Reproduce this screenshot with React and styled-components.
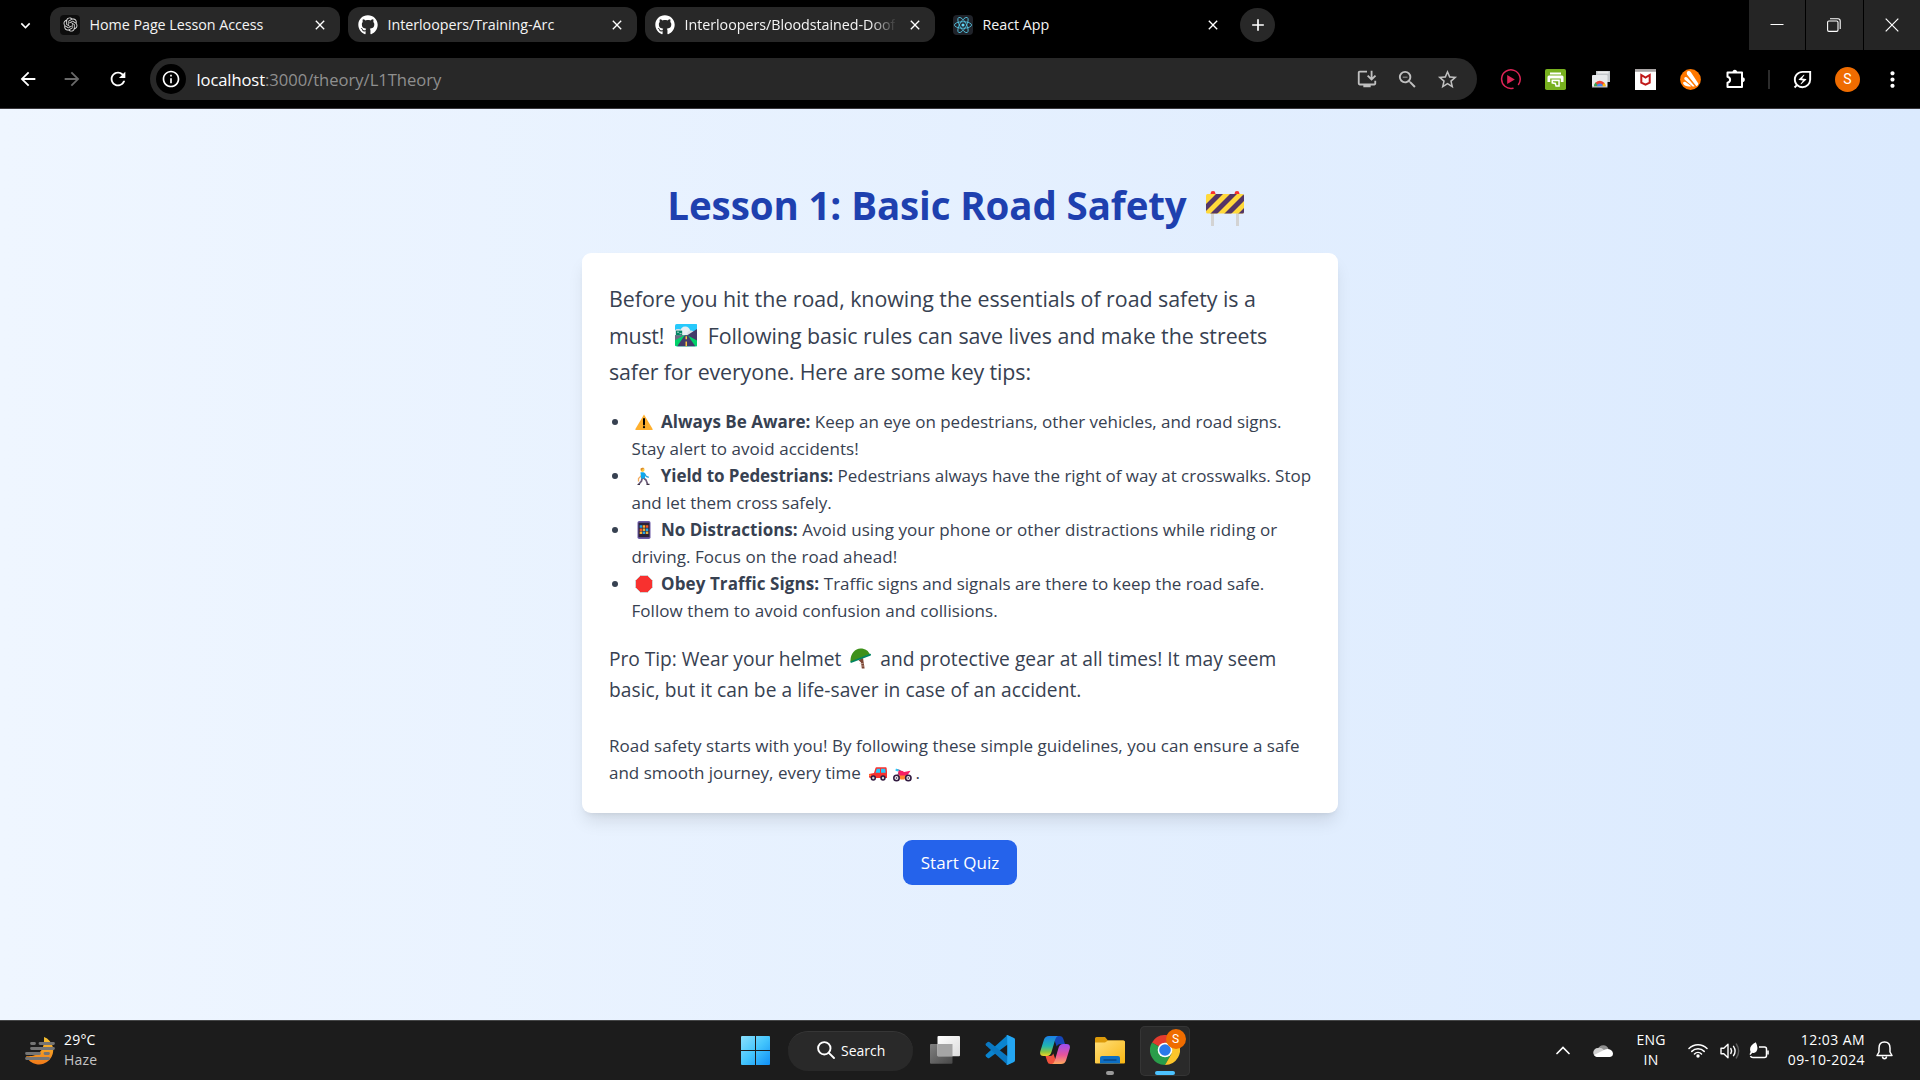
import React from 'react';
import styled, { createGlobalStyle, css } from 'styled-components';
import { FaGithub } from 'react-icons/fa';
import { RiOpenaiFill } from 'react-icons/ri';
import {
  MdArrowBack, MdArrowForward, MdRefresh, MdInfoOutline, MdStarBorder, MdZoomOut,
  MdOutlineInstallDesktop, MdOutlineEnergySavingsLeaf, MdMoreVert,
  MdExpandMore, MdClose, MdAdd,
} from 'react-icons/md';

const Global = createGlobalStyle`
  *, *::before, *::after { box-sizing: border-box; }
  body { margin: 0; background: #000; overflow: hidden; }
  svg { display: block; flex: none; }
`;

const Screen = styled.div`
  width: 1920px;
  height: 1080px;
  display: flex;
  flex-direction: column;
  font-family: "Open Sans", "Noto Sans", sans-serif;
`;

/* ---------- browser ---------- */

const TabStrip = styled.header`
  height: 50px;
  display: flex;
  align-items: flex-start;
  background: #000;
  color: #fff;
`;

const TabSearch = styled.div`
  width: 50px;
  height: 50px;
  display: grid;
  place-items: center;
`;

const Tab = styled.div`
  width: ${p => p.$width}px;
  height: 35px;
  margin: 7px 8px 0 0;
  padding: 0 11px 0 10px;
  display: flex;
  align-items: center;
  border-radius: 12px;
  background: ${p => (p.$active ? '#000' : '#282828')};
`;

const Favicon = styled.span`
  width: 20px;
  height: 20px;
  flex: none;
  display: grid;
  place-items: center;
  border-radius: 4px;
  background: ${p => p.$bg || 'transparent'};
`;

const TabTitle = styled.span`
  width: 210px;
  margin-left: 9.5px;
  padding-top: 1px;
  overflow: hidden;
  white-space: nowrap;
  font-size: 14.3px;
  line-height: 22px;
  letter-spacing: -0.04px;
  color: #f4f4f4;
  ${p => p.$fade && css`
    mask-image: linear-gradient(to right, #000 88%, transparent 101%);
  `}
`;

const TabClose = styled.span`
  margin-left: auto;
  width: 18px;
  height: 18px;
  flex: none;
  display: grid;
  place-items: center;
`;

const NewTab = styled.div`
  width: 35px;
  height: 34px;
  margin: 8px 0 0 -1px;
  border-radius: 50%;
  background: #282828;
  display: grid;
  place-items: center;
`;

const WindowControls = styled.div`
  margin-left: auto;
  display: flex;
  gap: 1px;
`;

const WindowButton = styled.div`
  width: 56.4px;
  height: 50px;
  background: #252525;
  display: grid;
  place-items: center;
`;

const Toolbar = styled.div`
  height: 59px;
  padding: 0 5px 0 6px;
  display: flex;
  align-items: center;
  background: #000;
  border-bottom: 1px solid #38363a;
  color: #fff;
`;

const ToolSlot = styled.div`
  width: ${p => p.$width || 45}px;
  height: 42px;
  flex: none;
  display: grid;
  place-items: center;
  color: ${p => p.$color || '#fff'};
`;

const AddressBar = styled.div`
  width: 1327px;
  height: 42px;
  margin: 0 11px 0 8px;
  padding: 0 10px 0 6px;
  display: flex;
  align-items: center;
  border-radius: 21px;
  background: #282828;
`;

const SiteInfo = styled.div`
  width: 30px;
  height: 30px;
  border-radius: 50%;
  background: #000;
  display: grid;
  place-items: center;
`;

const Url = styled.div`
  margin: 0 auto 0 10.5px;
  padding-top: 1px;
  font-size: 16.6px;
  line-height: 24px;
  letter-spacing: -0.02px;
  color: #8f8f8f;
  b { font-weight: 400; color: #fff; letter-spacing: -0.12px; }
`;

const Separator = styled.span`
  width: 2px;
  height: 19px;
  margin: 0 10px;
  background: #2c2c2c;
`;

const Avatar = styled.span`
  width: ${p => p.$size}px;
  height: ${p => p.$size}px;
  border-radius: 50%;
  background: #ef6c00;
  color: #fff;
  display: grid;
  place-items: center;
  font: 400 ${p => p.$font}px/1 Roboto, sans-serif;
`;

/* ---------- page ---------- */

const Page = styled.main`
  height: 911px;
  padding-top: 72px;
  display: flex;
  flex-direction: column;
  align-items: center;
  background: linear-gradient(to right, #eff6ff, #dbeafe);
`;

const Heading = styled.h1`
  margin: 0 0 27px;
  height: 45px;
  display: flex;
  align-items: center;
  gap: 19px;
  padding: 3px 9px 0 0;
  font-size: 38.5px;
  line-height: 45px;
  font-weight: 700;
  letter-spacing: -0.11px;
  color: #1e40af;
  white-space: nowrap;
`;

const Card = styled.section`
  width: 756px;
  height: 560px;
  padding: 27px;
  border-radius: 9px;
  background: #fff;
  color: #374151;
  box-shadow: 0 11.25px 17px -3.4px rgba(0, 0, 0, 0.1), 0 4.5px 6.75px -4.5px rgba(0, 0, 0, 0.1);
`;

const Line = styled.div`
  display: flex;
  align-items: center;
  white-space: nowrap;
`;

const Run = styled.span`
  height: 1lh;
  padding-top: var(--text-drop, 0px);
  letter-spacing: ${p => p.$track || 0}px;
  margin-left: ${p => p.$gap || 0}px;
`;

const Strong = styled.strong`
  height: 1lh;
  font-weight: 700;
  margin-left: 8.5px;
  letter-spacing: ${p => p.$track || 0}px;
`;

const Lead = styled.div`
  --text-drop: 1px;
  margin-bottom: 18px;
  font-size: 21.4px;
  line-height: 36.56px;
`;

const Tips = styled.ul`
  list-style: none;
  margin: 0 0 18px;
  padding: 0;
  font-size: 17px;
  line-height: 27px;
`;

const Tip = styled.li`
  padding-left: 22.5px;
`;

const Bullet = styled.span`
  width: 6px;
  height: 6px;
  margin: 2px 13px 0 -19.5px;
  border-radius: 50%;
  background: #374151;
`;

const ProTip = styled.div`
  --text-drop: 1px;
  margin-bottom: 27px;
  font-size: 19.2px;
  line-height: 31.5px;
`;

const Closing = styled.div`
  font-size: 17px;
  line-height: 27px;
`;

const EmojiBox = styled.span`
  display: inline-grid;
  place-items: center;
  width: ${p => p.$w}px;
  margin-left: ${p => p.$gap || 0}px;
  margin-top: ${p => p.$drop || 0}px;
`;

const QuizButton = styled.button`
  margin-top: 27px;
  width: 114px;
  height: 45px;
  padding: 0 0 1px;
  border: 0;
  border-radius: 9px;
  background: #2563eb;
  color: #fff;
  font: 400 17px/27px "Open Sans", sans-serif;
  letter-spacing: 0.05px;
`;

/* ---------- taskbar ---------- */

const Taskbar = styled.footer`
  height: 60px;
  display: grid;
  grid-template-columns: 720px 1fr 430px;
  background: #1c1c1c;
  border-top: 1px solid #454647;
  color: #fff;
`;

const Weather = styled.div`
  padding-left: 25px;
  display: flex;
  align-items: center;
  gap: 9px;
`;

const Stack = styled.div`
  flex: none;
  display: flex;
  flex-direction: column;
  align-items: ${p => p.$align || 'flex-start'};
  width: ${p => (p.$width ? p.$width + 'px' : 'auto')};
  padding-bottom: 2px;
  font-size: 14px;
  line-height: 20px;
  letter-spacing: ${p => p.$track || 0.2}px;
  white-space: nowrap;
`;

const Muted = styled.span`
  color: #c4c4c4;
`;

const Apps = styled.nav`
  padding-left: 8px;
  display: flex;
  align-items: center;
`;

const SearchPill = styled.div`
  width: 125px;
  height: 40px;
  margin: 0 4px 0 5px;
  padding: 0 0 2px 28.5px;
  display: flex;
  align-items: center;
  gap: 6.5px;
  border-radius: 20px;
  border-top: 1px solid #363636;
  background: #292929;
  font-size: 14px;
`;

const AppSlot = styled.div`
  width: 55px;
  height: 50px;
  display: grid;
  grid-template-rows: 45px 4px 1fr;
  justify-items: center;
  align-items: center;
  & > svg { margin-top: 4px; }
`;

const ActiveApp = styled(AppSlot)`
  width: 50px;
  margin-left: 2.5px;
  border-radius: 5px;
  background: #2a2a2a;
  box-shadow: inset 0 0 0 1px #353535;
`;

const Indicator = styled.span`
  width: ${p => (p.$active ? 20 : 8)}px;
  height: 4px;
  border-radius: 2px;
  background: ${p => (p.$active ? '#4cc2ff' : '#9a9a9a')};
`;

const ChromeIcon = styled.div`
  position: relative;
  width: 30px;
  height: 30px;
  margin-top: 4px;
`;

const Badge = styled.span`
  position: absolute;
  top: -6px;
  right: -6px;
`;

const Tray = styled.div`
  padding-right: 16px;
  display: flex;
  align-items: center;
  justify-content: flex-end;
`;

const TraySlot = styled.div`
  width: ${p => p.$width}px;
  flex: none;
  display: grid;
  place-items: center;
`;

/* ---------- emoji drawings ---------- */

const Emoji = ({ w, h, gap, drop, vb, children }) => (
  <EmojiBox $w={w} $gap={gap} $drop={drop}>
    <svg width={w} height={h} viewBox={vb || `0 0 ${w} ${h}`}>{children}</svg>
  </EmojiBox>
);

const Barrier = () => (
  <Emoji w={38} h={35} drop={6}>
    <clipPath id="board"><rect x="0" y="3" width="38" height="19.5" rx="1.5" /></clipPath>
    <circle cx="7" cy="2.5" r="2.4" fill="#f8312f" />
    <circle cx="31" cy="2.5" r="2.4" fill="#f8312f" />
    <path d="M5 22h3v13H5zM30 22h3v13h-3z" fill="#d3d3d3" />
    <g clipPath="url(#board)">
      <rect y="3" width="38" height="20" fill="#ffd93b" />
      <path d="M-2 15 11 2h7L-3 23zM4 23 25 2h7L11 23zM18 23 39 2v7L25 23zM32 23l8-8v8z" fill="#533566" />
    </g>
  </Emoji>
);

const Motorway = () => (
  <Emoji w={22.5} h={22.5} gap={10.5} drop={1} vb="0 0 22 22">
    <clipPath id="scene"><rect width="22" height="22" rx="1.6" /></clipPath>
    <g clipPath="url(#scene)">
      <rect width="22" height="22" fill="#26c9fc" />
      <circle cx="10" cy="7.5" r="5" fill="#e8eef2" />
      <circle cx="15.500" cy="10" r="3.600" fill="#d9e2e8" />
      <circle cx="3" cy="9" r="4" fill="#d9e2e8" />
      <path d="M0 11h22v11H0z" fill="#00d26a" />
      <path d="M22 4.500v12L12 11z" fill="#433b6b" />
      <path d="M9.500 11h3L20 22H2z" fill="#433b6b" />
      <path d="M0 11h9L0 16z" fill="#6b6a86" />
      <path d="M11 12v3M11 17v5" stroke="#ffc83d" strokeWidth="1.500" />
      <rect x="1" y="6.500" width="6" height="4.300" fill="#008463" />
      <path d="M2 8h2M4.500 9.500h2" stroke="#fff" strokeWidth=".7" />
    </g>
  </Emoji>
);

const Warning = () => (
  <Emoji w={18} h={16} gap={3.5} drop={2}>
    <path d="M9 .5 17.6 15a.7.7 0 0 1-.6 1H1a.7.7 0 0 1-.6-1z" fill="#ffb02e" />
    <path d="M9 5v5.600" stroke="#000" strokeWidth="2" strokeLinecap="round" />
    <circle cx="9" cy="13.200" r="1.100" fill="#000" />
  </Emoji>
);

const Walker = () => (
  <Emoji w={18} h={18} gap={3.5} drop={2}>
    <path d="M8 8 4.500 11.500v3" stroke="#f3ad61" strokeWidth="1.300" fill="none" />
    <path d="M8.500 10 7.500 14 4.500 17.500M9 10.500l3 2.500 1.500 4" stroke="#6b5b78" strokeWidth="1.700" fill="none" />
    <path d="M6.500 5.200h3L11 6v5.500H7z" fill="#0da8ee" />
    <path d="m10.500 6.500 1.800 3 2.500.8" stroke="#2a9fdc" strokeWidth="1.400" fill="none" />
    <circle cx="8.500" cy="2.800" r="2.100" fill="#ffc83d" />
    <path d="M6.500 1.800Q8 0 10.500 1L8.500 2.200 7.500 4z" fill="#d9892f" />
    <path d="M3.500 17.500h2.500M12.500 17.400h3" stroke="#3c3346" strokeWidth="1.100" />
  </Emoji>
);

const Phone = () => (
  <Emoji w={18} h={18} gap={3.5} drop={2}>
    <rect x="2.500" width="13" height="18" rx="1.700" fill="#6d5ba8" />
    <rect x="3.500" y="1.700" width="11" height="14.500" fill="#2b213a" />
    <path d="M4.700 4.200h2.500v2.500H4.700zM10.800 7.400h2.500v2.500h-2.500zM7.700 10.600h2.500v2.500H7.700z" fill="#26a6e8" />
    <path d="M7.700 4.200h2.500v2.500H7.700zM4.700 10.600h2.500v2.500H4.700z" fill="#ffb02e" />
    <path d="M10.800 4.200h2.500v2.500h-2.500zM4.700 7.400h2.500v2.500H4.700z" fill="#f4582d" />
    <path d="M7.700 7.400h2.500v2.500H7.700zM10.800 10.600h2.500v2.500h-2.500z" fill="#e4b33a" />
  </Emoji>
);

const StopSign = () => (
  <Emoji w={18} h={18} gap={3.5} drop={2}>
    <path d="M5.500.5h7l5 5v7l-5 5h-7l-5-5v-7z" fill="#f8312f" stroke="#d3d3d3" strokeWidth="1" />
  </Emoji>
);

const Helmet = () => (
  <Emoji w={21} h={21} gap={9} drop={2}>
    <path d="m8.500 12 2.500 2.500.8 6h2.800L13 10z" fill="#7d4533" />
    <path d="M9.500 15.500h4M10.500 18h4" stroke="#d8c2b8" strokeWidth=".6" />
    <path d="M.6 14.200C-.3 6.500 4.500.4 10.500.4c4.800 0 8.300 2.600 9.300 6z" fill="#3f911b" />
    <path d="M.3 13.500 20.300 5.800q1 .2.500 1.600L.900 15z" fill="#008463" />
  </Emoji>
);

const Car = () => (
  <Emoji w={18.5} h={14} gap={8} drop={4}>
    <path d="M0 7 5 6 6.500.9Q6.700.300 7.500.3h9.200q.8 0 .9.800l.6 5.500V11H.8L0 10z" fill="#f8312f" />
    <path d="M6.500 5.800 7.800 1.800H11v4zM12 1.800h4.200l.5 4H12z" fill="#26c9fc" />
    <circle cx="4.300" cy="11" r="2.700" fill="#321b41" /><circle cx="4.300" cy="11" r="1.200" fill="#d3d3d3" />
    <circle cx="14" cy="11" r="2.700" fill="#321b41" /><circle cx="14" cy="11" r="1.200" fill="#d3d3d3" />
    <path d="M.3 8.200h1.500" stroke="#ffd93b" />
  </Emoji>
);

const Motorcycle = () => (
  <Emoji w={19} h={14} gap={6} drop={5}>
    <path d="m4 1.500 3 1.200L3.500 10" stroke="#7b5b80" strokeWidth="1.300" fill="none" />
    <path d="M3 .5 6 2 4.500 3.500 2.300 2.500z" fill="#26c9fc" />
    <path d="M5 3.500q4-1.500 6 .5l6.500-1.300L15 6.500 13.500 8H6.500z" fill="#f51e63" />
    <path d="M5.500 7.500H13l-1.500 4h-4z" fill="#ff822d" />
    <circle cx="3.500" cy="10" r="2.700" fill="#f5f5f5" stroke="#321b41" strokeWidth="1.600" />
    <circle cx="15.300" cy="10" r="2.700" fill="#f5f5f5" stroke="#321b41" strokeWidth="1.600" />
    <circle cx="3.500" cy="10" r=".8" fill="#321b41" /><circle cx="15.300" cy="10" r=".8" fill="#321b41" />
  </Emoji>
);

/* ---------- icons ---------- */

const ReactLogo = () => (
  <svg width="18" height="18" viewBox="-11.500 -11.500 23 23">
    <circle r="2" fill="#61dafb" />
    <g stroke="#53c1de" strokeWidth="1.100" fill="none">
      <ellipse rx="11" ry="4.200" />
      <ellipse rx="11" ry="4.200" transform="rotate(60)" />
      <ellipse rx="11" ry="4.200" transform="rotate(120)" />
    </g>
  </svg>
);

const PlayRing = () => (
  <svg width="21" height="21" viewBox="0 0 21 21">
    <path d="M13 19.200A9.300 9.300 0 1 1 18.500 15.500" fill="none" stroke="#dd2456" strokeWidth="1.500" strokeLinecap="round" />
    <path d="M7.200 6v9l7.600-4.500z" fill="#dd2456" />
  </svg>
);

const PrinterTile = () => (
  <svg width="21" height="21" viewBox="0 0 21 21">
    <rect width="21" height="21" rx="1.800" fill="#77b01e" />
    <path d="M5 3.500h11v2H5zM4 6.500h13q1.500 0 1.500 1.500v5h-2.700V9.500H5.200V13H2.500V8Q2.500 6.500 4 6.500z" fill="#fff" />
    <path d="M6.500 10.500h8.300v7.300h-4.300l-.7-2.600-3.300-.8z" fill="#fff" />
    <path d="M8 12.300h5.300v4H11.500l-.5-2.500-3-.6z" fill="#77b01e" />
  </svg>
);

const NewsCards = () => (
  <svg width="20" height="18" viewBox="0 0 20 18">
    <path d="M5 1h14v11H5z" fill="#c3c7cb" />
    <path d="M6.500 1.500h11v2h-11z" fill="#eee" />
    <rect x="1" y="5" width="15.500" height="12" rx="1" fill="#e9ebed" />
    <path d="M3 16.500a5.800 5.800 0 0 1 11.600 0z" fill="#ea4335" />
    <path d="M3 16.500a5.800 5.800 0 0 1 1.500-4l3.300 4z" fill="#34a853" />
    <path d="M14.600 16.500a5.800 5.800 0 0 0-1.200-3.700l-3.400 3.700z" fill="#fbbc04" />
    <path d="M6 16.500a2.900 2.900 0 0 1 5.800 0z" fill="#4285f4" />
    <path d="M1 16.500h15.500v1H1z" fill="#bcc1c6" />
  </svg>
);

const ShieldTile = () => (
  <svg width="21" height="21" viewBox="0 0 21 21">
    <path d="M0 0h21v21H0z" fill="#fff" /><path d="M0 0h21v2.800H0z" fill="#a9a5a5" />
    <path d="M6.300 6v7.600l4.200 2 4.200-2V6l-4.200 2.600z" fill="none" stroke="#c01818" strokeWidth="2" />
  </svg>
);

const OrangeSwirl = () => (
  <svg width="21" height="21" viewBox="0 0 21 21">
    <circle cx="10.500" cy="10.500" r="10.400" fill="#ff7800" />
    <path d="M7.500 2.300q2-1.200 3.400 1l7.400 11.300q.3 1.900-1.800 2.600L7 5.600Q6.200 3.400 7.500 2.300z" fill="#fff" />
    <path d="M4.800 8.200q1.500-.8 2.600.5l7.300 8.600q-1 .5-2 .2L4.500 10.600Q3.800 9.200 4.800 8.200z" fill="#fff" />
    <path d="M3.300 13.200q1-.8 2.300-.2l5.800 4.300q-3.500.6-6-.5-3-1.800-2.100-3.600z" fill="#fff" />
  </svg>
);

const Puzzle = () => (
  <svg width="21" height="21" viewBox="0 0 21 21" fill="none" stroke="#fff" strokeWidth="2" strokeLinejoin="round">
    <path d="M2.500 3.500h14.500v14.500H2.500v-4.200q2.600-.6 2.600-3t-2.600-3z" />
    <path d="M7.500 3.500a2.200 2.700 0 0 1 4.600 0zM17 8.300a2.700 2.300 0 0 1 0 4.800z" fill="#fff" stroke="none" />
  </svg>
);

const HazeMoon = () => (
  <svg width="30" height="28" viewBox="0 0 30 28">
    <linearGradient id="moon" x1="0" y1="0" x2="0" y2="1"><stop stopColor="#f7c331" /><stop offset="1" stopColor="#f0791a" /></linearGradient>
    <path d="M19 0a14.200 14.200 0 1 1-18 19c9 1 19-2 18-19z" fill="url(#moon)" />
    <g stroke="#757575" strokeWidth="2.800" strokeLinecap="round">
      <path d="M6.500 6.500h3M15 6.500h13.500M6.500 11.500h22M1.500 16.500h13M20 16.500h3.500M1.500 21.500h22" />
    </g>
  </svg>
);

const WindowsLogo = () => (
  <svg width="29" height="29" viewBox="0 0 29 29">
    <linearGradient id="win" x1="0" y1="0" x2="1" y2="1"><stop stopColor="#8be0fd" /><stop offset=".5" stopColor="#44c5fc" /><stop offset="1" stopColor="#0f8ff5" /></linearGradient>
    <path d="M1 0h13v14H0V1q0-1 1-1zM15 0h13q1 0 1 1v13H15zM0 15h14v14H1q-1 0-1-1zM15 15h14v13q0 1-1 1H15z" fill="url(#win)" />
  </svg>
);

const SearchGlass = () => (
  <svg width="18" height="18" viewBox="0 0 18 18" fill="none" stroke="#fff" strokeWidth="1.900">
    <circle cx="7.300" cy="7.300" r="6.200" /><path d="m11.800 11.800 5.200 5.200" strokeLinecap="round" />
  </svg>
);

const TaskView = () => (
  <svg width="30" height="28" viewBox="0 0 30 28">
    <linearGradient id="tvw" x1="0" y1="0" x2="1" y2="1"><stop stopColor="#fff" /><stop offset="1" stopColor="#dcdcdc" /></linearGradient>
    <linearGradient id="tvg" x1="0" y1="0" x2="1" y2="1"><stop stopColor="#808080" /><stop offset="1" stopColor="#484848" /></linearGradient>
    <rect y="8" width="22.500" height="19.700" rx="1" fill="url(#tvg)" />
    <rect x="7.500" y="0" width="22.500" height="20.300" rx="1" fill="url(#tvw)" />
    <path d="M7.500 8h15v12.300h-15z" fill="#a5a5a5" />
  </svg>
);

const VsCode = () => (
  <svg width="30" height="30" viewBox="0 0 30 30">
    <path d="M22.300.3 1 19.600Q0 20.600 1 21.500l1.700 1.500q.8.600 1.700 0L30 4z" fill="#0a84cf" />
    <path d="M22.300 29.700 1 10.400Q0 9.400 1 8.500L2.700 7q.8-.6 1.700 0L29 26.500z" fill="#0a78c2" />
    <path d="M22.400 0 29 3.100q1 .5 1 1.600v20.600q0 1.100-1 1.600L22.400 30q-1 .3-1.800-.5 1.600.7 1.600-1.200V1.700q0-1.900-1.600-1.200Q21.400-.3 22.400 0z" fill="#24a6f2" />
  </svg>
);

const Copilot = () => (
  <svg width="30" height="28" viewBox="0 0 30 28">
    <linearGradient id="cpa" x1="0" y1="0" x2="0" y2="1"><stop stopColor="#1b7fe8" /><stop offset=".5" stopColor="#20b5b0" /><stop offset=".8" stopColor="#8cc63f" /><stop offset="1" stopColor="#f5d52a" /></linearGradient>
    <linearGradient id="cpb" x1="0" y1="0" x2="0" y2="1"><stop stopColor="#9a4df2" /><stop offset=".55" stopColor="#e8549a" /><stop offset="1" stopColor="#ffa95c" /></linearGradient>
    <path d="M13 0h7q2.500 0 3.200 2.500L25 8h-5q-2.500 0-3.300 2.500z" fill="#1546b8" />
    <path d="M17 28h-6.500q-2.500 0-3.200-2.500L5.500 20H10q2.500 0 3.300-2.500z" fill="#f0523d" />
    <path d="M9 0h9q-2 .8-2.800 3.500L11.500 16q-1.200 4-4.500 4H3.500Q-1 20 .4 15L4 3.500Q5.200 0 9 0z" fill="url(#cpa)" />
    <path d="M21 28h-9q2-.8 2.800-3.500L18.500 12q1.200-4 4.500-4h3.500q4.500 0 3.100 5L26 24.500Q24.800 28 21 28z" fill="url(#cpb)" />
  </svg>
);

const Explorer = () => (
  <svg width="30" height="27" viewBox="0 0 30 27">
    <linearGradient id="fol" x1="0" y1="0" x2="1" y2="1"><stop stopColor="#ffdf7a" /><stop offset="1" stopColor="#f9b612" /></linearGradient>
    <path d="M0 1.500Q0 0 1.500 0H10l3 3.500h15q2 0 2 2V12H0z" fill="#dc9a0a" />
    <path d="M0 5.500h10L13 3.500h15.500q1.500 0 1.500 1.500v20.500q0 1-1 1H1q-1 0-1-1z" fill="url(#fol)" />
    <path d="M5 26.500V21q0-2 2-2h16q2 0 2 2v5.500z" fill="#0d6fc4" />
    <path d="M8.500 23h13" stroke="#07427f" strokeWidth="1.300" />
  </svg>
);

const Chrome = () => (
  <svg width="30" height="30" viewBox="0 0 30 30">
    <path d="M15 15 2 7.500A15 15 0 0 1 28 7.500H15z" fill="#e33b2e" />
    <path d="M15 15 2 7.500A15 15 0 0 0 15 30l6.500-11.300z" fill="#2a9d4a" />
    <path d="M15 7.500h13A15 15 0 0 1 15 30l6.500-11.300z" fill="#fcc52b" />
    <circle cx="15" cy="15" r="7.300" fill="#fff" /><circle cx="15" cy="15" r="5.800" fill="#2b79ea" />
  </svg>
);

const Cloud = () => (
  <svg width="20" height="13" viewBox="0 0 20 13">
    <path d="M5 5a5.500 5.500 0 0 1 10.500 0l-4 3z" fill="#8f8f8f" />
    <path d="M4.500 13A4.500 4.500 0 0 1 5 4q3.500-.7 6 2l5 4z" fill="#d0d0d0" />
    <path d="M4 13q-2-.3-3-2l9-4.500Q12 4.800 15 5q4.500.8 5 4.500 0 3-3 3.500z" fill="#fff" />
  </svg>
);

const Wifi = () => (
  <svg width="20" height="15" viewBox="0 0 20 15" fill="none" stroke="#fff" strokeWidth="1.500" strokeLinecap="round">
    <path d="M1 5.500a12.700 12.700 0 0 1 18 0M3.800 8.400a8.700 8.700 0 0 1 12.400 0M6.500 11a5 5 0 0 1 7 0" />
    <circle cx="10" cy="13" r="1.700" fill="#fff" stroke="none" />
  </svg>
);

const Volume = () => (
  <svg width="20" height="18" viewBox="0 0 20 18" fill="none" stroke="#fff" strokeWidth="1.400" strokeLinecap="round" strokeLinejoin="round">
    <path d="M1 6.300h2.800L8 2.300v13.400l-4.200-4H1zM10.800 6.500q1.600 2.500 0 5M13.500 4.300q3.200 4.700 0 9.400" />
    <path d="M16.300 2q4.700 7 0 14" stroke="#5c5c5c" />
  </svg>
);

const BatteryLeaf = () => (
  <svg width="20" height="18" viewBox="0 0 20 18" fill="none" stroke="#fff" strokeWidth="1.500">
    <path d="M10 5h5.500q2 0 2 2v6.500q0 2-2 2H4q-2 0-2.500-1.500" />
    <path d="M18.200 8.500h1.600v4h-1.600z" fill="#fff" stroke="none" />
    <path d="M6.800.3q3 6 .6 9.200-1.600 2-4 1.300L1.300 13l-.8-.8L1.600 10Q-.7 4 6.800.3z" fill="#fff" stroke="none" />
  </svg>
);

const Bell = () => (
  <svg width="17" height="19" viewBox="0 0 17 19" fill="none" stroke="#fff" strokeWidth="1.500" strokeLinejoin="round">
    <path d="M8.500 1Q3 1 3 7v4l-2 3.500h15L14 11V7q0-6-5.500-6z" /><path d="M6.300 15.500q.5 2.300 2.200 2.300t2.200-2.300" />
  </svg>
);

const Caret = () => (
  <svg width="14" height="9" viewBox="0 0 14 9" fill="none" stroke="#fff" strokeWidth="1.700" strokeLinecap="round"><path d="m1 7.500 6-6 6 6" /></svg>
);

/* ---------- content ---------- */

const TABS = [
  { title: 'Home Page Lesson Access', width: 290, bg: '#0d0d0d', icon: <RiOpenaiFill size={17} color="#d8d8d8" /> },
  { title: 'Interloopers/Training-Arc', width: 289, icon: <FaGithub size={20} color="#fff" /> },
  { title: 'Interloopers/Bloodstained-Doof', width: 290, fade: true, icon: <FaGithub size={20} color="#fff" /> },
  { title: 'React App', width: 290, active: true, bg: '#20232a', icon: <ReactLogo /> },
];

const TIPS = [
  { icon: <Warning />, label: 'Always Be Aware:', lt: 0, text: 'Keep an eye on pedestrians, other vehicles, and road signs.', tt: -0.02, rest: 'Stay alert to avoid accidents!', rt: 0.06 },
  { icon: <Walker />, label: 'Yield to Pedestrians:', lt: -0.06, text: 'Pedestrians always have the right of way at crosswalks. Stop', tt: -0.03, rest: 'and let them cross safely.', rt: -0.04 },
  { icon: <Phone />, label: 'No Distractions:', lt: 0, text: 'Avoid using your phone or other distractions while riding or', tt: 0.07, rest: 'driving. Focus on the road ahead!', rt: 0.06 },
  { icon: <StopSign />, label: 'Obey Traffic Signs:', lt: 0.1, text: 'Traffic signs and signals are there to keep the road safe.', tt: -0.02, rest: 'Follow them to avoid confusion and collisions.', rt: 0.06 },
];

export default function App() {
  return (
    <Screen>
      <Global />
      <TabStrip>
        <TabSearch><MdExpandMore size={19} /></TabSearch>
        {TABS.map(t => (
          <Tab key={t.title} $width={t.width} $active={t.active}>
            <Favicon $bg={t.bg}>{t.icon}</Favicon>
            <TabTitle $fade={t.fade}>{t.title}</TabTitle>
            <TabClose><MdClose size={16} /></TabClose>
          </Tab>
        ))}
        <NewTab><MdAdd size={20} /></NewTab>
        <WindowControls>
          <WindowButton><svg width="14" height="14" viewBox="0 0 14 14"><path d="M.5 6.500h13" stroke="#fff" /></svg></WindowButton>
          <WindowButton>
            <svg width="14" height="14" viewBox="0 0 14 14" fill="none" stroke="#fff" strokeWidth="1.100">
              <rect x=".6" y="3" width="10.400" height="10.400" rx="1.300" /><path d="M3 .8h8q2.200 0 2.200 2.200v8" />
            </svg>
          </WindowButton>
          <WindowButton><svg width="14" height="14" viewBox="0 0 14 14"><path d="m.7.700 12.600 12.600M13.300.700.700 13.300" stroke="#fff" strokeWidth="1.200" /></svg></WindowButton>
        </WindowControls>
      </TabStrip>

      <Toolbar>
        <ToolSlot $width={44}><MdArrowBack size={22} /></ToolSlot>
        <ToolSlot $width={44} $color="#6a6a6a"><MdArrowForward size={22} /></ToolSlot>
        <ToolSlot $width={48}><MdRefresh size={22} /></ToolSlot>
        <AddressBar>
          <SiteInfo><MdInfoOutline size={20} /></SiteInfo>
          <Url><b>localhost</b>:3000/theory/L1Theory</Url>
          <ToolSlot $width={40} $color="#c0c0c0"><MdOutlineInstallDesktop size={22} /></ToolSlot>
          <ToolSlot $width={40} $color="#c0c0c0"><MdZoomOut size={23} /></ToolSlot>
          <ToolSlot $width={40} $color="#c0c0c0"><MdStarBorder size={23} /></ToolSlot>
        </AddressBar>
        <ToolSlot><PlayRing /></ToolSlot>
        <ToolSlot><PrinterTile /></ToolSlot>
        <ToolSlot><NewsCards /></ToolSlot>
        <ToolSlot><ShieldTile /></ToolSlot>
        <ToolSlot><OrangeSwirl /></ToolSlot>
        <ToolSlot><Puzzle /></ToolSlot>
        <Separator />
        <ToolSlot><MdOutlineEnergySavingsLeaf size={23} /></ToolSlot>
        <ToolSlot><Avatar $size={25} $font={14}>S</Avatar></ToolSlot>
        <ToolSlot><MdMoreVert size={25} /></ToolSlot>
      </Toolbar>

      <Page>
        <Heading>Lesson 1: Basic Road Safety <Barrier /></Heading>
        <Card>
          <Lead>
            <Line><Run $track={-0.04}>Before you hit the road, knowing the essentials of road safety is a</Run></Line>
            <Line>
              <Run $track={-0.25}>must!</Run><Motorway />
              <Run $gap={10.5} $track={-0.05}>Following basic rules can save lives and make the streets</Run>
            </Line>
            <Line><Run $track={-0.13}>safer for everyone. Here are some key tips:</Run></Line>
          </Lead>
          <Tips>
            {TIPS.map(t => (
              <Tip key={t.label}>
                <Line>
                  <Bullet />{t.icon}
                  <Strong $track={t.lt}>{t.label}</Strong>
                  <Run $gap={4.5} $track={t.tt}>{t.text}</Run>
                </Line>
                <Line><Run $track={t.rt}>{t.rest}</Run></Line>
              </Tip>
            ))}
          </Tips>
          <ProTip>
            <Line>
              <Run $track={-0.05}>Pro Tip: Wear your helmet</Run><Helmet />
              <Run $gap={9} $track={0.03}>and protective gear at all times! It may seem</Run>
            </Line>
            <Line><Run $track={0.04}>basic, but it can be a life-saver in case of an accident.</Run></Line>
          </ProTip>
          <Closing>
            <Line><Run $track={0.02}>Road safety starts with you! By following these simple guidelines, you can ensure a safe</Run></Line>
            <Line>
              <Run $track={-0.01}>and smooth journey, every time</Run><Car /><Motorcycle /><Run $gap={3}>.</Run>
            </Line>
          </Closing>
        </Card>
        <QuizButton>Start Quiz</QuizButton>
      </Page>

      <Taskbar>
        <Weather>
          <HazeMoon />
          <Stack><span>29°C</span><Muted>Haze</Muted></Stack>
        </Weather>
        <Apps>
          <AppSlot><WindowsLogo /></AppSlot>
          <SearchPill><SearchGlass />Search</SearchPill>
          <AppSlot><TaskView /></AppSlot>
          <AppSlot><VsCode /></AppSlot>
          <AppSlot><Copilot /></AppSlot>
          <AppSlot><Explorer /><Indicator /></AppSlot>
          <ActiveApp>
            <ChromeIcon>
              <Chrome />
              <Badge><Avatar $size={20} $font={12}>S</Avatar></Badge>
            </ChromeIcon>
            <Indicator $active />
          </ActiveApp>
        </Apps>
        <Tray>
          <TraySlot $width={40}><Caret /></TraySlot>
          <TraySlot $width={40}><Cloud /></TraySlot>
          <Stack $align="center" $width={56}><span>ENG</span><span>IN</span></Stack>
          <TraySlot $width={38}><Wifi /></TraySlot>
          <TraySlot $width={25}><Volume /></TraySlot>
          <TraySlot $width={34}><BatteryLeaf /></TraySlot>
          <Stack $align="flex-end" $width={89} $track={0.42}><span>12:03 AM</span><span>09-10-2024</span></Stack>
          <TraySlot $width={39}><Bell /></TraySlot>
        </Tray>
      </Taskbar>
    </Screen>
  );
}
